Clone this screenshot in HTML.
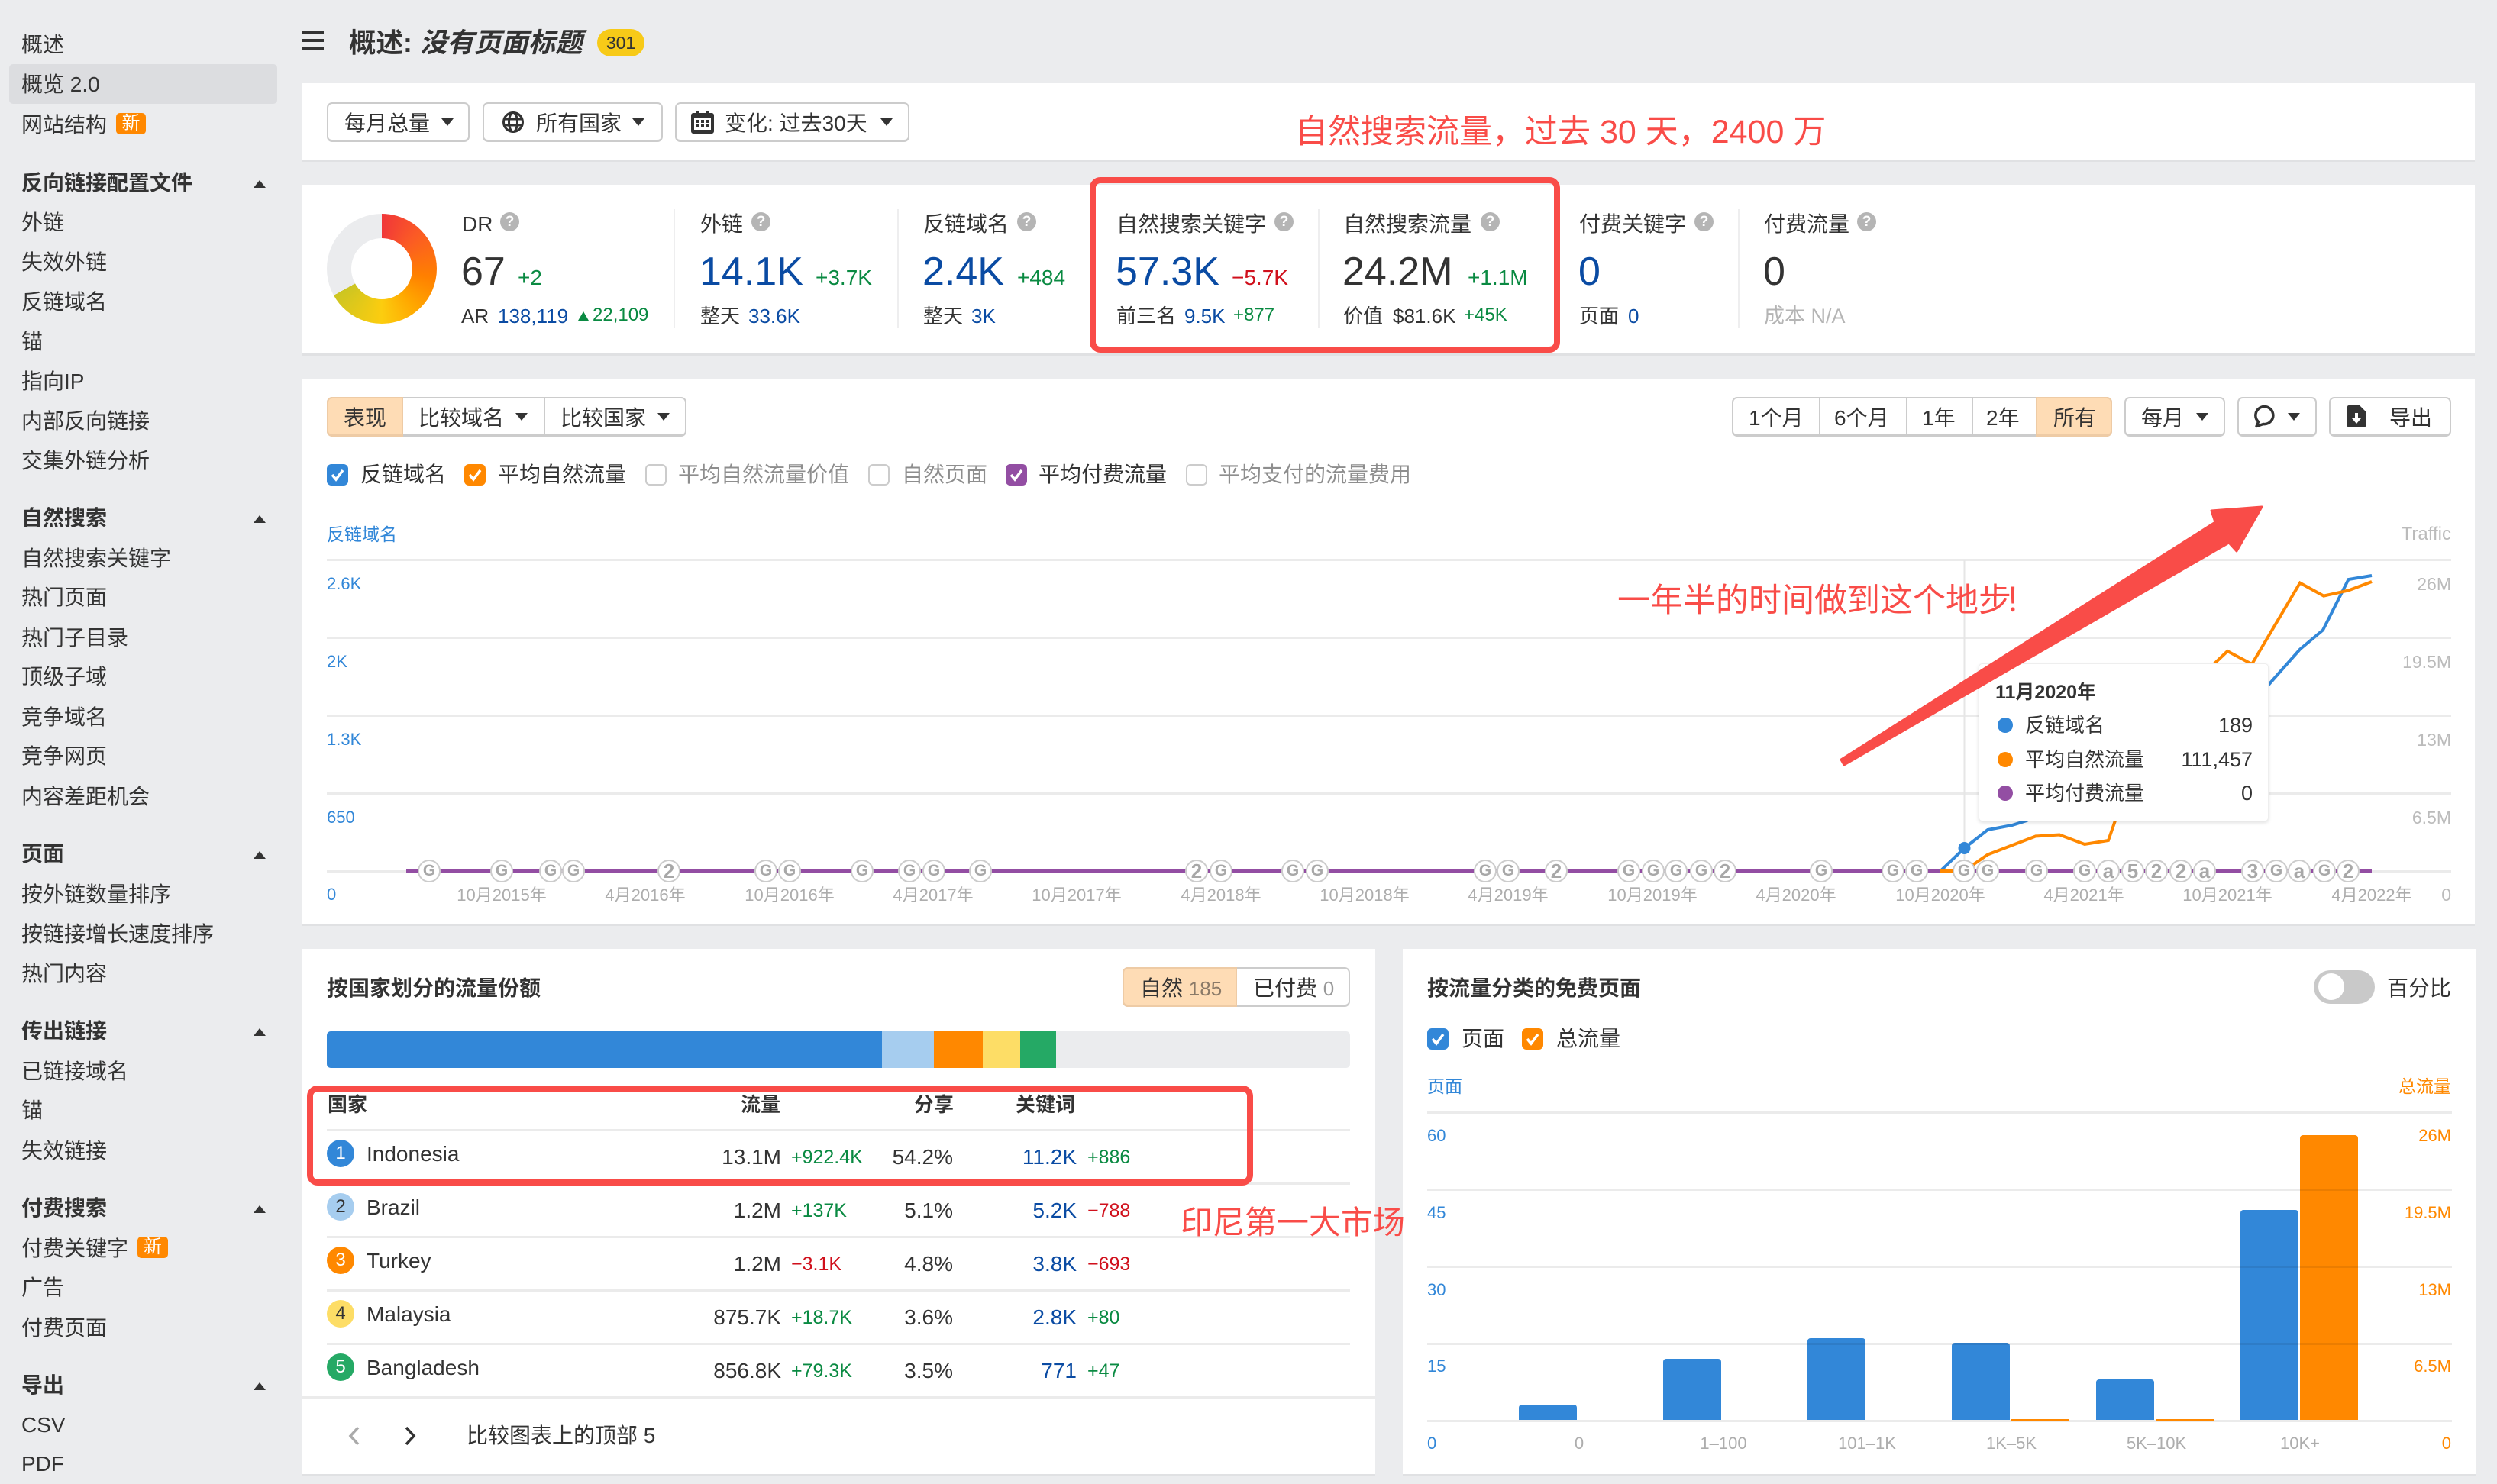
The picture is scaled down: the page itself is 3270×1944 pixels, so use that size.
<!DOCTYPE html>
<html lang="zh-CN"><head><meta charset="utf-8"><title>概述</title>
<style>
html,body{margin:0;padding:0;background:#ebecee}
#r{position:relative;width:3270px;height:1944px;overflow:hidden;background:#ebecee;color:#333;font-family:"Liberation Sans","Noto Sans CJK SC",sans-serif;font-size:28px}
.t{position:absolute;white-space:nowrap;line-height:40px;margin-top:-18px}
.t.l{margin-top:-20px}
.rt{transform:translateX(-100%)}
.c{transform:translateX(-50%)}
.h{font-weight:700}
.card{position:absolute;background:#fff;border-bottom:3px solid #e0e1e3;box-sizing:border-box}
.t.b{font-size:52px;line-height:60px;margin-top:-28px}
.bl{color:#0a4ba3}.gr{color:#0a8a42}.rd{color:#d0101c}
.d{font-size:26px}
.s{font-size:25px}
.s2{font-size:24px}
.btn{position:absolute;box-sizing:border-box;background:#fff;border:2px solid #ccc;border-bottom-width:3px;border-radius:7px}
.ar{position:absolute;width:0;height:0;border-left:8px solid transparent;border-right:8px solid transparent;border-top:10px solid #333;margin-left:-8px;margin-top:-5px}
.up{position:absolute;width:0;height:0;border-left:8px solid transparent;border-right:8px solid transparent;border-bottom:10px solid #333;left:332px}
.q{position:absolute;width:25px;height:25px;border-radius:50%;background:#b5b5b5;color:#fff;font-size:19px;font-weight:700;line-height:25px;text-align:center;margin:-12px 0 0 -12px;font-style:normal}
.dv{position:absolute;width:2px;top:274px;height:156px;background:#eeeeef}
.cb{position:absolute;width:28px;height:28px;border-radius:6px;box-sizing:border-box;margin-top:-14px}
.cb svg{display:block}
.cb.off{background:#fff;border:2px solid #ccc}
.line{position:absolute;height:3px;background:#ebebeb}
.ax{font-size:22px;color:#adadad}
.axr{font-size:23px;color:#bbb}
.axb{font-size:22px;color:#3287d8}
.axo{font-size:22px;color:#ff8800}
.g{position:absolute;top:1126px;width:30px;height:30px;box-sizing:border-box;margin-left:-15px;border:2px solid #ccc;border-radius:50%;background:#fff;color:#a8a8a8;font-weight:700;font-style:normal;font-size:21px;line-height:26px;text-align:center}
.g.n{font-size:26px}
.new{position:absolute;background:#ff8800;color:#fff;text-align:center;border-radius:5px}
.num{position:absolute;left:428px;width:36px;height:36px;border-radius:50%;text-align:center;line-height:36px;font-size:24px;margin-top:-18px;color:#fff}
.anno{position:absolute;white-space:nowrap;color:#f94c48;line-height:60px;margin-top:-28px}
.box{position:absolute;box-sizing:border-box;border:8px solid #f94c48;border-radius:14px}
.bar{position:absolute;background:#3287d8;border-radius:4px 4px 0 0}
.seg{position:absolute;top:1351px;height:48px}
.th{font-size:26px;font-weight:700}
</style></head><body><div id="r">

<!-- sidebar -->
<div style="position:absolute;left:12px;top:84px;width:351px;height:52px;background:#dcdde0;border-radius:5px"></div>
<span class="t" style="left:28px;top:57px">概述</span>
<span class="t" style="left:28px;top:109px">概览 2.0</span>
<span class="t" style="left:28px;top:162px">网站结构</span>
<span class="new" style="left:152px;top:148px;width:39px;height:28px;line-height:28px;font-size:24px">新</span>
<span class="t h" style="left:28px;top:238px">反向链接配置文件</span><i class="up" style="top:236px"></i>
<span class="t" style="left:28px;top:290px">外链</span>
<span class="t" style="left:28px;top:342px">失效外链</span>
<span class="t" style="left:28px;top:394px">反链域名</span>
<span class="t" style="left:28px;top:446px">锚</span>
<span class="t" style="left:28px;top:498px">指向IP</span>
<span class="t" style="left:28px;top:550px">内部反向链接</span>
<span class="t" style="left:28px;top:602px">交集外链分析</span>
<span class="t h" style="left:28px;top:677px">自然搜索</span><i class="up" style="top:675px"></i>
<span class="t" style="left:28px;top:730px">自然搜索关键字</span>
<span class="t" style="left:28px;top:781px">热门页面</span>
<span class="t" style="left:28px;top:834px">热门子目录</span>
<span class="t" style="left:28px;top:885px">顶级子域</span>
<span class="t" style="left:28px;top:938px">竞争域名</span>
<span class="t" style="left:28px;top:989px">竞争网页</span>
<span class="t" style="left:28px;top:1042px">内容差距机会</span>
<span class="t h" style="left:28px;top:1117px">页面</span><i class="up" style="top:1115px"></i>
<span class="t" style="left:28px;top:1170px">按外链数量排序</span>
<span class="t" style="left:28px;top:1222px">按链接增长速度排序</span>
<span class="t" style="left:28px;top:1274px">热门内容</span>
<span class="t h" style="left:28px;top:1349px">传出链接</span><i class="up" style="top:1347px"></i>
<span class="t" style="left:28px;top:1402px">已链接域名</span>
<span class="t" style="left:28px;top:1453px">锚</span>
<span class="t" style="left:28px;top:1506px">失效链接</span>
<span class="t h" style="left:28px;top:1581px">付费搜索</span><i class="up" style="top:1579px"></i>
<span class="t" style="left:28px;top:1634px">付费关键字</span>
<span class="new" style="left:180px;top:1620px;width:40px;height:28px;line-height:28px;font-size:24px">新</span>
<span class="t" style="left:28px;top:1685px">广告</span>
<span class="t" style="left:28px;top:1738px">付费页面</span>
<span class="t h" style="left:28px;top:1813px">导出</span><i class="up" style="top:1811px"></i>
<span class="t" style="left:28px;top:1865px">CSV</span>
<span class="t" style="left:28px;top:1916px">PDF</span>

<!-- header -->
<div style="position:absolute;left:396px;top:41px;width:28px;height:4px;background:#333"></div>
<div style="position:absolute;left:396px;top:51px;width:28px;height:4px;background:#333"></div>
<div style="position:absolute;left:396px;top:61px;width:28px;height:4px;background:#333"></div>
<span class="t h" style="left:457px;top:54px;font-size:35.5px">概述: <em>没有页面标题</em></span>
<span style="position:absolute;left:782px;top:38px;width:62px;height:36px;border-radius:18px;background:#f7ca18;text-align:center;line-height:36px;font-size:23px">301</span>

<!-- filter card -->
<div class="card" style="left:396px;top:109px;width:2845px;height:103px"></div>
<div class="btn" style="left:428px;top:134px;width:187px;height:52px"></div>
<span class="t" style="left:451px;top:160px">每月总量</span><i class="ar" style="left:586px;top:160px"></i>
<div class="btn" style="left:632px;top:134px;width:236px;height:52px"></div>
<svg style="position:absolute;left:658px;top:146px" width="28" height="28" viewBox="0 0 28 28" fill="none" stroke="#333" stroke-width="3"><circle cx="14" cy="14" r="12.5"/><ellipse cx="14" cy="14" rx="5.5" ry="12.5"/><path d="M2 10h24M2 18h24"/></svg>
<span class="t" style="left:702px;top:160px">所有国家</span><i class="ar" style="left:836px;top:160px"></i>
<div class="btn" style="left:884px;top:134px;width:307px;height:52px"></div>
<svg style="position:absolute;left:905px;top:145px" width="30" height="30" viewBox="0 0 30 30"><path fill="#333" d="M7 0h3v3h10V0h3v3h4a3 3 0 0 1 3 3v21a3 3 0 0 1-3 3H3a3 3 0 0 1-3-3V6a3 3 0 0 1 3-3h4z"/><rect x="4" y="10" width="22" height="15" fill="#fff"/><path fill="#333" d="M7 12h4v4H7zM13 12h4v4h-4zM19 12h4v4h-4zM7 18h4v4H7zM13 18h4v4h-4zM19 18h4v4h-4z"/></svg>
<span class="t" style="left:949px;top:160px">变化: 过去30天</span><i class="ar" style="left:1161px;top:160px"></i>

<!-- stats card -->
<div class="card" style="left:396px;top:242px;width:2845px;height:224px"></div>
<div style="position:absolute;left:428px;top:280px;width:144px;height:144px;border-radius:50%;background:conic-gradient(#f0373a 0deg,#fb5a25 45deg,#ff8000 100deg,#ffa800 140deg,#fccd0f 180deg,#ccc522 241deg,#ebecee 241deg,#ebecee 360deg)"></div>
<div style="position:absolute;left:460px;top:312px;width:80px;height:80px;border-radius:50%;background:#fff"></div>

<span class="t" style="left:605px;top:292px">DR</span><i class="q" style="left:667px;top:290px">?</i>
<span class="t b" style="left:604px;top:354px">67</span>
<span class="t l gr" style="left:678px;top:364px">+2</span>
<span class="t l d" style="left:604px;top:414px">AR</span>
<span class="t l d bl" style="left:652px;top:414px">138,119</span>
<svg style="position:absolute;left:757px;top:408px" width="14" height="12"><path fill="#0a8a42" d="M7 0l7 12H0z"/></svg>
<span class="t l s2 gr" style="left:776px;top:413px">22,109</span>
<i class="dv" style="left:882px"></i>

<span class="t" style="left:917px;top:292px">外链</span><i class="q" style="left:996px;top:290px">?</i>
<span class="t b bl" style="left:916px;top:354px">14.1K</span>
<span class="t l gr" style="left:1068px;top:364px">+3.7K</span>
<span class="t l d" style="left:917px;top:414px">整天</span>
<span class="t l d bl" style="left:980px;top:414px">33.6K</span>
<i class="dv" style="left:1175px"></i>

<span class="t" style="left:1209px;top:292px">反链域名</span><i class="q" style="left:1344px;top:290px">?</i>
<span class="t b bl" style="left:1208px;top:354px">2.4K</span>
<span class="t l gr" style="left:1332px;top:364px">+484</span>
<span class="t l d" style="left:1209px;top:414px">整天</span>
<span class="t l d bl" style="left:1272px;top:414px">3K</span>

<span class="t" style="left:1462px;top:292px">自然搜索关键字</span><i class="q" style="left:1681px;top:290px">?</i>
<span class="t b bl" style="left:1461px;top:354px">57.3K</span>
<span class="t l rd" style="left:1613px;top:364px">−5.7K</span>
<span class="t l d" style="left:1462px;top:414px">前三名</span>
<span class="t l d bl" style="left:1551px;top:414px">9.5K</span>
<span class="t l s2 gr" style="left:1615px;top:413px">+877</span>
<i class="dv" style="left:1726px"></i>

<span class="t" style="left:1759px;top:292px">自然搜索流量</span><i class="q" style="left:1951px;top:290px">?</i>
<span class="t b" style="left:1758px;top:354px">24.2M</span>
<span class="t l gr" style="left:1922px;top:364px">+1.1M</span>
<span class="t l d" style="left:1759px;top:414px">价值</span>
<span class="t l d" style="left:1824px;top:414px">$81.6K</span>
<span class="t l s2 gr" style="left:1917px;top:413px">+45K</span>

<span class="t" style="left:2068px;top:292px">付费关键字</span><i class="q" style="left:2231px;top:290px">?</i>
<span class="t b bl" style="left:2067px;top:354px">0</span>
<span class="t l d" style="left:2068px;top:414px">页面</span>
<span class="t l d bl" style="left:2132px;top:414px">0</span>
<i class="dv" style="left:2276px"></i>

<span class="t" style="left:2310px;top:292px">付费流量</span><i class="q" style="left:2444px;top:290px">?</i>
<span class="t b" style="left:2309px;top:354px">0</span>
<span class="t l" style="left:2310px;top:414px;color:#b5b5b5;font-size:27px">成本 N/A</span>

<!-- main chart card -->
<div class="card" style="left:396px;top:496px;width:2845px;height:717px"></div>
<div class="btn" style="left:428px;top:520px;width:471px;height:52px"></div>
<div style="position:absolute;left:428px;top:520px;width:100px;height:52px;background:#fedcb5;border:2px solid #eecba5;border-bottom-width:3px;border-radius:7px 0 0 7px;box-sizing:border-box"></div>
<i style="position:absolute;left:712px;top:520px;width:2px;height:52px;background:#ccc"></i>
<span class="t" style="left:450px;top:546px">表现</span>
<span class="t" style="left:548px;top:546px">比较域名</span><i class="ar" style="left:683px;top:546px"></i>
<span class="t" style="left:734px;top:546px">比较国家</span><i class="ar" style="left:869px;top:546px"></i>

<div class="btn" style="left:2268px;top:520px;width:498px;height:52px"></div>
<div style="position:absolute;left:2666px;top:520px;width:100px;height:52px;background:#fedcb5;border:2px solid #eecba5;border-bottom-width:3px;border-radius:0 7px 7px 0;box-sizing:border-box"></div>
<i style="position:absolute;left:2382px;top:520px;width:2px;height:52px;background:#ccc"></i>
<i style="position:absolute;left:2496px;top:520px;width:2px;height:52px;background:#ccc"></i>
<i style="position:absolute;left:2582px;top:520px;width:2px;height:52px;background:#ccc"></i>
<span class="t" style="left:2290px;top:546px">1个月</span>
<span class="t" style="left:2402px;top:546px">6个月</span>
<span class="t" style="left:2517px;top:546px">1年</span>
<span class="t" style="left:2601px;top:546px">2年</span>
<span class="t" style="left:2689px;top:546px">所有</span>
<div class="btn" style="left:2782px;top:520px;width:132px;height:52px"></div>
<span class="t" style="left:2804px;top:546px">每月</span><i class="ar" style="left:2884px;top:546px"></i>
<div class="btn" style="left:2930px;top:520px;width:104px;height:52px"></div>
<svg style="position:absolute;left:2952px;top:531px" width="28" height="30" viewBox="0 0 28 30" fill="none"><path stroke="#333" stroke-width="3.5" stroke-linejoin="round" d="M5.5 21.5A11.5 11.5 0 1 1 12 24.5L3 27.5z"/></svg>
<i class="ar" style="left:3004px;top:546px"></i>
<div class="btn" style="left:3050px;top:520px;width:160px;height:52px"></div>
<svg style="position:absolute;left:3074px;top:531px" width="24" height="29" viewBox="0 0 24 29"><path fill="#333" d="M2 0h14l8 8v19a2 2 0 0 1-2 2H2a2 2 0 0 1-2-2V2a2 2 0 0 1 2-2z"/><path fill="#fff" d="M10 10h4v7h4l-6 7-6-7h4z"/></svg>
<span class="t" style="left:3129px;top:546px">导出</span>

<div class="cb" style="left:428px;top:622px;background:#3287d8"><svg width="28" height="28"><path d="M7 14l5 6 9-12" fill="none" stroke="#fff" stroke-width="3.5"/></svg></div>
<span class="t l" style="left:472px;top:622px">反链域名</span>
<div class="cb" style="left:608px;top:622px;background:#ff8800"><svg width="28" height="28"><path d="M7 14l5 6 9-12" fill="none" stroke="#fff" stroke-width="3.5"/></svg></div>
<span class="t l" style="left:652px;top:622px">平均自然流量</span>
<div class="cb off" style="left:845px;top:622px"></div>
<span class="t l" style="left:888px;top:622px;color:#8e8e8e">平均自然流量价值</span>
<div class="cb off" style="left:1137px;top:622px"></div>
<span class="t l" style="left:1181px;top:622px;color:#8e8e8e">自然页面</span>
<div class="cb" style="left:1317px;top:622px;background:#934ea3"><svg width="28" height="28"><path d="M7 14l5 6 9-12" fill="none" stroke="#fff" stroke-width="3.5"/></svg></div>
<span class="t l" style="left:1360px;top:622px">平均付费流量</span>
<div class="cb off" style="left:1553px;top:622px"></div>
<span class="t l" style="left:1596px;top:622px;color:#8e8e8e">平均支付的流量费用</span>

<span class="t l axb" style="left:428px;top:700px;font-size:23px">反链域名</span>
<span class="t l rt" style="left:3210px;top:700px;color:#bbb;font-size:24px">Traffic</span>

<div class="line" style="left:428px;top:732px;width:2782px"></div>
<div class="line" style="left:428px;top:834px;width:2782px"></div>
<div class="line" style="left:428px;top:936px;width:2782px"></div>
<div class="line" style="left:428px;top:1038px;width:2782px"></div>
<div class="line" style="left:428px;top:1140px;width:2782px"></div>

<span class="t axb" style="left:428px;top:763px">2.6K</span>
<span class="t axb" style="left:428px;top:865px">2K</span>
<span class="t axb" style="left:428px;top:967px">1.3K</span>
<span class="t axb" style="left:428px;top:1069px">650</span>
<span class="t l axb" style="left:428px;top:1172px">0</span>
<span class="t axr rt" style="left:3210px;top:763px">26M</span>
<span class="t axr rt" style="left:3210px;top:865px">19.5M</span>
<span class="t axr rt" style="left:3210px;top:967px">13M</span>
<span class="t axr rt" style="left:3210px;top:1069px">6.5M</span>
<span class="t l axr rt" style="left:3210px;top:1172px">0</span>

<span class="t ax c" style="left:657px;top:1171px">10月2015年</span>
<span class="t ax c" style="left:845px;top:1171px">4月2016年</span>
<span class="t ax c" style="left:1034px;top:1171px">10月2016年</span>
<span class="t ax c" style="left:1222px;top:1171px">4月2017年</span>
<span class="t ax c" style="left:1410px;top:1171px">10月2017年</span>
<span class="t ax c" style="left:1599px;top:1171px">4月2018年</span>
<span class="t ax c" style="left:1787px;top:1171px">10月2018年</span>
<span class="t ax c" style="left:1975px;top:1171px">4月2019年</span>
<span class="t ax c" style="left:2164px;top:1171px">10月2019年</span>
<span class="t ax c" style="left:2352px;top:1171px">4月2020年</span>
<span class="t ax c" style="left:2541px;top:1171px">10月2020年</span>
<span class="t ax c" style="left:2729px;top:1171px">4月2021年</span>
<span class="t ax c" style="left:2917px;top:1171px">10月2021年</span>
<span class="t ax c" style="left:3106px;top:1171px">4月2022年</span>

<svg style="position:absolute;left:0;top:0" width="3270" height="1944" fill="none">
<path d="M2572.5 733V1141" stroke="#e6e6e6" stroke-width="2"/>
<path d="M532 1141H3106" stroke="#934ea3" stroke-width="5"/>
<path d="M2541 1141L2572.5 1111 2603 1087 2635 1081 2654 1075 2970 898 3012 850.5 3042 825.4 3075.5 759 3106 754" stroke="#3287d8" stroke-width="4"/>
<path d="M2541 1141H2572L2603 1119.5 2666 1095.4 2697 1093.5 2730 1106 2761 1101 2770 1075 2897 872 2917 853 2949 870 3012 763.6 3043 780.6 3075.5 773.5 3106 762" stroke="#ff8800" stroke-width="4"/>
<circle cx="2572.5" cy="1111" r="8" fill="#3287d8"/>
</svg>

<i class="g" style="left:562px">G</i><i class="g" style="left:657px">G</i><i class="g" style="left:721px">G</i><i class="g" style="left:751px">G</i><i class="g n" style="left:876px">2</i><i class="g" style="left:1003px">G</i><i class="g" style="left:1034px">G</i><i class="g" style="left:1129px">G</i><i class="g" style="left:1191px">G</i><i class="g" style="left:1223px">G</i><i class="g" style="left:1284px">G</i><i class="g n" style="left:1567px">2</i><i class="g" style="left:1599px">G</i><i class="g" style="left:1693px">G</i><i class="g" style="left:1725px">G</i><i class="g" style="left:1945px">G</i><i class="g" style="left:1975px">G</i><i class="g n" style="left:2038px">2</i><i class="g" style="left:2133px">G</i><i class="g" style="left:2165px">G</i><i class="g" style="left:2195px">G</i><i class="g" style="left:2228px">G</i><i class="g n" style="left:2259px">2</i><i class="g" style="left:2385px">G</i><i class="g" style="left:2479px">G</i><i class="g" style="left:2510px">G</i><i class="g" style="left:2572px">G</i><i class="g" style="left:2603px">G</i><i class="g" style="left:2667px">G</i><i class="g" style="left:2730px">G</i><i class="g n" style="left:2761px">a</i><i class="g n" style="left:2793px">5</i><i class="g n" style="left:2824px">2</i><i class="g n" style="left:2856px">2</i><i class="g n" style="left:2887px">a</i><i class="g n" style="left:2950px">3</i><i class="g" style="left:2981px">G</i><i class="g n" style="left:3011px">a</i><i class="g" style="left:3044px">G</i><i class="g n" style="left:3075px">2</i>

<!-- tooltip -->
<div style="position:absolute;left:2591px;top:869px;width:380px;height:207px;background:#fff;border:1px solid #eee;border-radius:5px;box-sizing:border-box;box-shadow:0 2px 5px rgba(0,0,0,.12)"></div>
<span class="t l h" style="left:2613px;top:907px;font-size:25px">11月2020年</span>
<i style="position:absolute;left:2616px;top:940px;width:20px;height:20px;border-radius:50%;background:#3287d8"></i>
<span class="t l d" style="left:2652px;top:950px">反链域名</span><span class="t l rt" style="left:2950px;top:950px;font-size:27px">189</span>
<i style="position:absolute;left:2616px;top:985px;width:20px;height:20px;border-radius:50%;background:#ff8800"></i>
<span class="t l d" style="left:2652px;top:995px">平均自然流量</span><span class="t l rt" style="left:2950px;top:995px;font-size:27px">111,457</span>
<i style="position:absolute;left:2616px;top:1029px;width:20px;height:20px;border-radius:50%;background:#934ea3"></i>
<span class="t l d" style="left:2652px;top:1039px">平均付费流量</span><span class="t l rt" style="left:2950px;top:1039px;font-size:27px">0</span>

<!-- left bottom card -->
<div class="card" style="left:396px;top:1243px;width:1405px;height:691px"></div>
<span class="t h" style="left:428px;top:1293px;font-size:28px">按国家划分的流量份额</span>
<div class="btn" style="left:1470px;top:1267px;width:298px;height:52px"></div>
<div style="position:absolute;left:1470px;top:1267px;width:150px;height:52px;background:#fedcb5;border:2px solid #eecba5;border-bottom-width:3px;border-radius:7px 0 0 7px;box-sizing:border-box"></div>
<span class="t" style="left:1493px;top:1293px">自然 <span style="color:#8a7a68;font-size:26px">185</span></span>
<span class="t" style="left:1641px;top:1293px">已付费 <span style="color:#999;font-size:26px">0</span></span>

<div class="seg" style="left:428px;width:1340px;background:#ebecee;border-radius:5px"></div>
<div class="seg" style="left:428px;width:727px;background:#3287d8;border-radius:5px 0 0 5px"></div>
<div class="seg" style="left:1155px;width:68px;background:#a6cdef"></div>
<div class="seg" style="left:1223px;width:64px;background:#ff8800"></div>
<div class="seg" style="left:1287px;width:49px;background:#fddd66"></div>
<div class="seg" style="left:1336px;width:47px;background:#25a965"></div>

<span class="t l th" style="left:429px;top:1447px">国家</span>
<span class="t l th rt" style="left:1022px;top:1447px">流量</span>
<span class="t l th rt" style="left:1249px;top:1447px">分享</span>
<span class="t l th rt" style="left:1408px;top:1447px">关键词</span>
<div class="line" style="left:428px;top:1479px;width:1340px"></div>
<div class="line" style="left:428px;top:1549px;width:1340px"></div>
<div class="line" style="left:428px;top:1619px;width:1340px"></div>
<div class="line" style="left:428px;top:1689px;width:1340px"></div>
<div class="line" style="left:428px;top:1759px;width:1340px"></div>
<div class="line" style="left:396px;top:1829px;width:1405px"></div>

<span class="num" style="top:1511px;background:#3287d8">1</span><span class="t l" style="left:480px;top:1512px">Indonesia</span>
<span class="t l rt" style="left:1023px;top:1516px">13.1M</span><span class="t l s gr" style="left:1036px;top:1516px">+922.4K</span>
<span class="t l rt" style="left:1248px;top:1516px">54.2%</span>
<span class="t l rt bl" style="left:1410px;top:1516px">11.2K</span><span class="t l s gr" style="left:1424px;top:1516px">+886</span>

<span class="num" style="top:1581px;background:#a6cdef;color:#333">2</span><span class="t l" style="left:480px;top:1582px">Brazil</span>
<span class="t l rt" style="left:1023px;top:1586px">1.2M</span><span class="t l s gr" style="left:1036px;top:1586px">+137K</span>
<span class="t l rt" style="left:1248px;top:1586px">5.1%</span>
<span class="t l rt bl" style="left:1410px;top:1586px">5.2K</span><span class="t l s rd" style="left:1424px;top:1586px">−788</span>

<span class="num" style="top:1651px;background:#ff8800">3</span><span class="t l" style="left:480px;top:1652px">Turkey</span>
<span class="t l rt" style="left:1023px;top:1656px">1.2M</span><span class="t l s rd" style="left:1036px;top:1656px">−3.1K</span>
<span class="t l rt" style="left:1248px;top:1656px">4.8%</span>
<span class="t l rt bl" style="left:1410px;top:1656px">3.8K</span><span class="t l s rd" style="left:1424px;top:1656px">−693</span>

<span class="num" style="top:1721px;background:#fddd66;color:#333">4</span><span class="t l" style="left:480px;top:1722px">Malaysia</span>
<span class="t l rt" style="left:1023px;top:1726px">875.7K</span><span class="t l s gr" style="left:1036px;top:1726px">+18.7K</span>
<span class="t l rt" style="left:1248px;top:1726px">3.6%</span>
<span class="t l rt bl" style="left:1410px;top:1726px">2.8K</span><span class="t l s gr" style="left:1424px;top:1726px">+80</span>

<span class="num" style="top:1791px;background:#25a965">5</span><span class="t l" style="left:480px;top:1792px">Bangladesh</span>
<span class="t l rt" style="left:1023px;top:1796px">856.8K</span><span class="t l s gr" style="left:1036px;top:1796px">+79.3K</span>
<span class="t l rt" style="left:1248px;top:1796px">3.5%</span>
<span class="t l rt bl" style="left:1410px;top:1796px">771</span><span class="t l s gr" style="left:1424px;top:1796px">+47</span>

<svg style="position:absolute;left:450px;top:1866px" width="100" height="30" fill="none" stroke-width="3.5"><path d="M19 4L9 15l10 11" stroke="#aaa"/><path d="M82 4l10 11-10 11" stroke="#333"/></svg>
<span class="t l" style="left:611px;top:1881px">比较图表上的顶部 5</span>

<!-- right bottom card -->
<div class="card" style="left:1837px;top:1243px;width:1405px;height:691px"></div>
<span class="t h" style="left:1869px;top:1293px;font-size:28px">按流量分类的免费页面</span>
<div style="position:absolute;left:3030px;top:1271px;width:80px;height:44px;border-radius:22px;background:#c9c9c9"></div>
<div style="position:absolute;left:3036px;top:1275px;width:34px;height:35px;border-radius:50%;background:#fff"></div>
<span class="t" style="left:3126px;top:1293px">百分比</span>

<div class="cb" style="left:1869px;top:1361px;background:#3287d8"><svg width="28" height="28"><path d="M7 14l5 6 9-12" fill="none" stroke="#fff" stroke-width="3.5"/></svg></div>
<span class="t l" style="left:1914px;top:1361px">页面</span>
<div class="cb" style="left:1993px;top:1361px;background:#ff8800"><svg width="28" height="28"><path d="M7 14l5 6 9-12" fill="none" stroke="#fff" stroke-width="3.5"/></svg></div>
<span class="t l" style="left:2038px;top:1361px">总流量</span>

<span class="t l axb" style="left:1869px;top:1423px;font-size:23px">页面</span>
<span class="t l axo rt" style="left:3210px;top:1423px;font-size:23px">总流量</span>

<div class="line" style="left:1869px;top:1456px;width:1342px"></div>

<div class="bar" style="left:1989px;top:1840px;width:76px;height:21px"></div>
<div class="bar" style="left:2178px;top:1780px;width:76px;height:81px"></div>
<div class="bar" style="left:2367px;top:1753px;width:76px;height:108px"></div>
<div class="bar" style="left:2556px;top:1759px;width:76px;height:102px"></div>
<div class="bar" style="left:2745px;top:1807px;width:76px;height:54px"></div>
<div class="bar" style="left:2934px;top:1585px;width:76px;height:276px"></div>
<div class="bar" style="left:3012px;top:1487px;width:76px;height:374px;background:#ff8800"></div>

<div class="line" style="left:1869px;top:1557px;width:1342px;background:rgba(0,0,0,.08)"></div>
<div class="line" style="left:1869px;top:1658px;width:1342px;background:rgba(0,0,0,.08)"></div>
<div class="line" style="left:1869px;top:1759px;width:1342px;background:rgba(0,0,0,.08)"></div>
<div class="line" style="left:1869px;top:1860px;width:1342px"></div>
<div style="position:absolute;left:2634px;top:1859px;width:76px;height:2px;background:#ff8800"></div>
<div style="position:absolute;left:2823px;top:1859px;width:76px;height:2px;background:#ff8800"></div>

<span class="t l axb" style="left:1869px;top:1488px">60</span>
<span class="t l axb" style="left:1869px;top:1589px">45</span>
<span class="t l axb" style="left:1869px;top:1690px">30</span>
<span class="t l axb" style="left:1869px;top:1790px">15</span>
<span class="t l axb" style="left:1869px;top:1891px">0</span>
<span class="t l axo rt" style="left:3210px;top:1488px">26M</span>
<span class="t l axo rt" style="left:3210px;top:1589px">19.5M</span>
<span class="t l axo rt" style="left:3210px;top:1690px">13M</span>
<span class="t l axo rt" style="left:3210px;top:1790px">6.5M</span>
<span class="t l axo rt" style="left:3210px;top:1891px">0</span>
<span class="t l ax c" style="left:2068px;top:1891px">0</span>
<span class="t l ax c" style="left:2257px;top:1891px">1–100</span>
<span class="t l ax c" style="left:2445px;top:1891px">101–1K</span>
<span class="t l ax c" style="left:2634px;top:1891px">1K–5K</span>
<span class="t l ax c" style="left:2824px;top:1891px">5K–10K</span>
<span class="t l ax c" style="left:3012px;top:1891px">10K+</span>

<!-- annotations -->
<div class="box" style="left:1427px;top:232px;width:616px;height:230px"></div>
<div class="box" style="left:402px;top:1422px;width:1239px;height:131px"></div>
<span class="anno" style="left:1696px;top:171px;font-size:43px">自然搜索流量，过去 30 天，2400 万</span>
<span class="anno" style="left:2118px;top:785px;font-size:43px">一年半的时间做到这个地<span style="letter-spacing:-9px">步</span>！</span>
<span class="anno" style="left:1546px;top:1600px;font-size:42px">印尼第一大市场</span>
<svg style="position:absolute;left:0;top:0" width="3270" height="1944"><path d="M2411 995L2901 684 2896 669 2962 664 2929 722 2919 711 2415 1002z" fill="#f94c48" stroke="#f94c48" stroke-width="3" stroke-linejoin="round"/></svg>

</div></body></html>
